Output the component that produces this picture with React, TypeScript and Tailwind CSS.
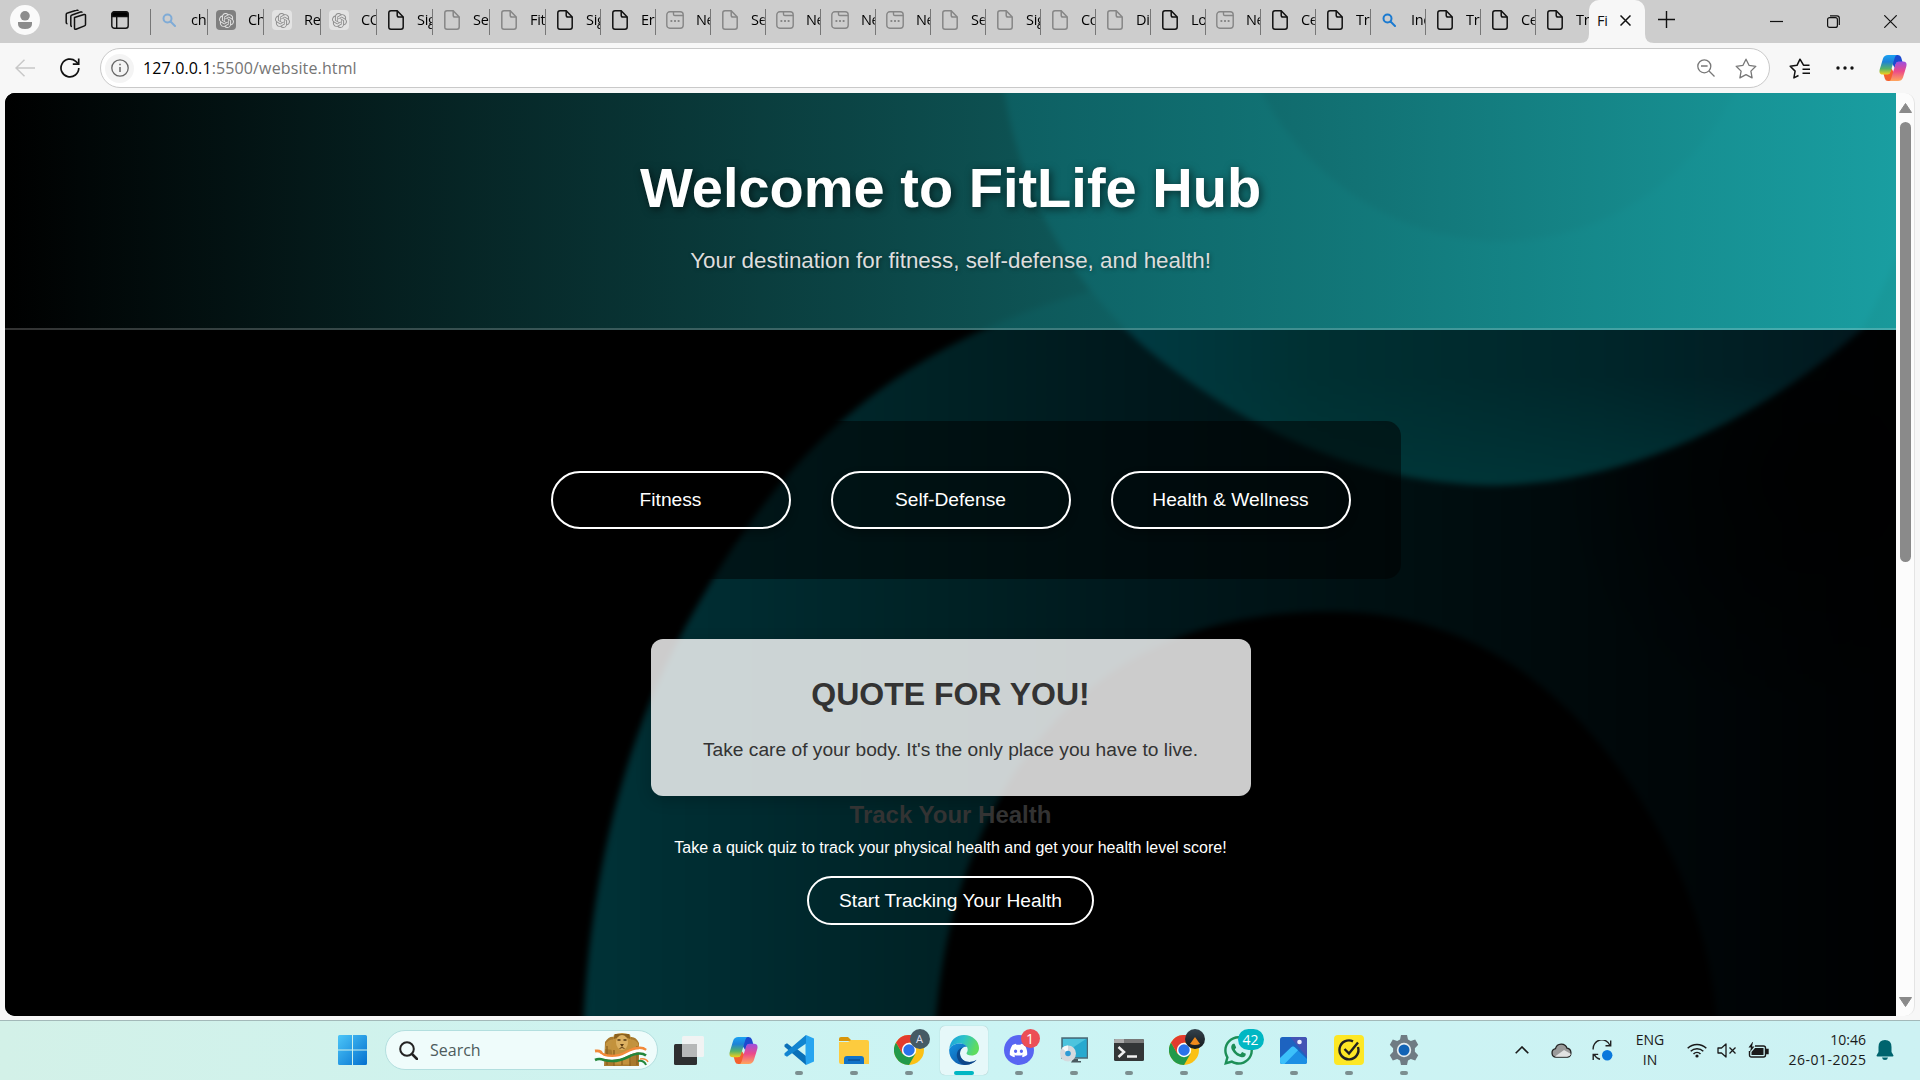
import React from 'react';
import { SiOpenai } from 'react-icons/si';
import { FaDiscord, FaWhatsapp } from 'react-icons/fa';

type TabKind = 'search' | 'gptDark' | 'gpt' | 'doc' | 'form';
type Tab = { kind: TabKind; text: string; w: number; dim?: boolean };

const tabs: Tab[] = [
  { kind: 'search', text: 'cha', w: 57, dim: true },
  { kind: 'gptDark', text: 'Cha', w: 56, dim: true },
  { kind: 'gpt', text: 'Rec', w: 57, dim: true },
  { kind: 'gpt', text: 'CO', w: 56, dim: true },
  { kind: 'doc', text: 'Sig', w: 56 },
  { kind: 'doc', text: 'Sec', w: 57, dim: true },
  { kind: 'doc', text: 'Fitl', w: 56, dim: true },
  { kind: 'doc', text: 'Sig', w: 55 },
  { kind: 'doc', text: 'Err', w: 55 },
  { kind: 'form', text: 'Ne', w: 55, dim: true },
  { kind: 'doc', text: 'Se', w: 55, dim: true },
  { kind: 'form', text: 'Ne', w: 55, dim: true },
  { kind: 'form', text: 'Ne', w: 55, dim: true },
  { kind: 'form', text: 'Ne', w: 55, dim: true },
  { kind: 'doc', text: 'Se', w: 55, dim: true },
  { kind: 'doc', text: 'Sig', w: 55, dim: true },
  { kind: 'doc', text: 'Co', w: 55, dim: true },
  { kind: 'doc', text: 'Dis', w: 55, dim: true },
  { kind: 'doc', text: 'Log', w: 55 },
  { kind: 'form', text: 'Ne', w: 55, dim: true },
  { kind: 'doc', text: 'Ce', w: 55 },
  { kind: 'doc', text: 'Tra', w: 55 },
  { kind: 'search', text: 'Inc', w: 55 },
  { kind: 'doc', text: 'Tra', w: 55 },
  { kind: 'doc', text: 'Ce', w: 55 },
  { kind: 'doc', text: 'Tra', w: 54 },
];

function TabIcon({ kind, dim }: { kind: TabKind; dim?: boolean }) {
  const stroke = dim ? '#868686' : '#111';
  if (kind === 'search')
    return (
      <svg width="14" height="14" viewBox="0 0 14 14" fill="none" stroke={dim ? '#7fabd6' : '#1b7ad0'} strokeWidth="2">
        <circle cx="5.5" cy="5.5" r="4" />
        <path d="M8.5 8.5 13 13" strokeLinecap="round" />
      </svg>
    );
  if (kind === 'gptDark')
    return (
      <span className="-ml-[3px] flex h-5 w-5 items-center justify-center rounded-[4px] bg-[#7f7f7f] text-[#e2e2e2]">
        <SiOpenai size={15} />
      </span>
    );
  if (kind === 'gpt')
    return (
      <span className="-ml-[3px] flex h-5 w-5 items-center justify-center rounded-[4px] bg-[#e3e3e3] text-[#8e8e8e]">
        <SiOpenai size={15} />
      </span>
    );
  if (kind === 'form')
    return (
      <svg className="-ml-px" width="18" height="18" viewBox="0 0 18 18" fill="none" stroke={stroke} strokeWidth="1.4">
        <rect x="0.8" y="0.8" width="16.4" height="16.4" rx="3" />
        <path d="M7.5 1v2.2q0 1.3 1.3 1.3H17" />
        <path d="M4.5 10h1.8M8.1 10h1.8M11.7 10h1.8" strokeWidth="1.9" />
      </svg>
    );
  return (
    <svg width="16" height="20" viewBox="0 0 16 20" fill="none" stroke={stroke} strokeWidth="1.5" strokeLinejoin="round">
      <path d="M3 .8h6.2L15.2 7v10q0 2.2-2.2 2.2H3Q.8 19.2.8 17V3Q.8.8 3 .8Z" />
      <path d="M9.2.8V5.2q0 1.8 1.8 1.8h4.2" />
    </svg>
  );
}

function Copilot({ size, id }: { size: number; id: string }) {
  return (
    <svg width={size} height={size} viewBox="0 0 28 28">
      <defs>
        <linearGradient id={id + 'a'} x1="0" y1="0" x2="0" y2="1">
          <stop offset="0" stopColor="#1aa2f2" />
          <stop offset=".35" stopColor="#1d82d8" />
          <stop offset=".7" stopColor="#55b26a" />
          <stop offset="1" stopColor="#f3cf1a" />
        </linearGradient>
        <linearGradient id={id + 'b'} x1="0" y1="0" x2="0" y2="1">
          <stop offset="0" stopColor="#9a4fe0" />
          <stop offset=".5" stopColor="#ec4a8a" />
          <stop offset="1" stopColor="#ffa65c" />
        </linearGradient>
      </defs>
      <path d="M13 1h6q2.500 0 3.200 2.500L23.500 8h-4q-2 0-2.600 2l-1 4-5-8Z" fill="#1b4ad0" />
      <path d="M15 27H9q-2.500 0-3.200-2.500L4.500 20h4q2 0 2.600-2l1-4 5 8Z" fill="#f4602e" />
      <path d="M9 1h9q-1.500 0-2.200 2.500L11.500 18q-.7 2.500-3 2.500H4q-4.500 0-3.300-5L4 4.500Q5.200 1 9 1Z" fill={`url(#${id}a)`} />
      <path d="M19 27h-9q1.500 0 2.200-2.500L16.500 10q.7-2.500 3-2.500H24q4.500 0 3.300 5L24 23.500Q22.800 27 19 27Z" fill={`url(#${id}b)`} />
    </svg>
  );
}

function TabStrip() {
  return (
    <div className="flex h-[43px] items-start bg-[#cdcdcd]">
      <div className="flex w-[150px] shrink-0 items-center pt-[5px] pl-[10px]">
        <svg width="30" height="30" viewBox="0 0 30 30">
          <circle cx="15" cy="15" r="15" fill="#fafafa" />
          <circle cx="15" cy="10.800" r="4.800" fill="#8c8c8c" />
          <path d="M8 17h14v2q0 5-7 5t-7-5Z" fill="#8c8c8c" />
        </svg>
        <svg className="ml-[25px]" width="22" height="22" viewBox="0 0 22 22" fill="none" stroke="#111" strokeWidth="1.500" strokeLinejoin="round">
          <path d="M9.500 8.500 19 5.500q1.500-.3 1.500 1v9q0 1-1 1.400L11 20.200q-1.500.4-1.500-1Z" />
          <path d="M17 3.800q0-1.200-1.500-.8L7 6q-1.200.3-1.200 1.500v8.700q0 1.200 1.200 1.200" />
          <path d="M13 2q0-1.200-1.500-.7L2.500 4Q1.200 4.300 1.200 5.500v8q0 1.200 1.300 1.200" />
        </svg>
        <svg className="ml-6" width="18" height="18" viewBox="0 0 18 18" fill="none" stroke="#111" strokeWidth="1.400">
          <rect x=".8" y=".8" width="16.400" height="16.400" rx="2.500" />
          <path d="M1 3.500Q1 1 3.500 1h11Q17 1 17 3.500V5.500H1Z" fill="#000" />
          <path d="M5.700 5v12" />
        </svg>
      </div>
      <div className="mt-[9px] h-[26px] w-px bg-[#777]" />
      {tabs.map((t, i) => (
        <div key={i} className="relative flex h-[40px] shrink-0 items-center overflow-hidden pl-[11px]" style={{ width: t.w }}>
          <span className="flex w-[29px] shrink-0">
            <TabIcon kind={t.kind} dim={t.dim} />
          </span>
          <span className="whitespace-nowrap bg-linear-to-r from-black from-60% to-[#999] bg-clip-text font-['Open_Sans','Noto_Sans',sans-serif] text-[14.5px] tracking-[-0.3px] text-transparent">
            {t.text}
          </span>
          {i < tabs.length - 1 && <span className="absolute top-[9px] right-0 h-[26px] w-px bg-[#777]" />}
        </div>
      ))}
      <div className="relative -ml-px flex h-[43px] w-[56px] shrink-0 items-center rounded-t-[10px] bg-[#f7f7f7] pb-[2px] pl-[8px]">
        <svg className="absolute bottom-0 -left-[9px]" width="9" height="9" viewBox="0 0 9 9">
          <path d="M9 0Q9 9 0 9h9Z" fill="#f7f7f7" />
        </svg>
        <svg className="absolute bottom-0 -right-[9px]" width="9" height="9" viewBox="0 0 9 9">
          <path d="M0 0Q0 9 9 9H0Z" fill="#f7f7f7" />
        </svg>
        <span className="w-[23px] font-['Open_Sans','Noto_Sans',sans-serif] text-[14.5px] tracking-[-0.3px] text-[#111]">Fi</span>
        <svg width="11" height="11" viewBox="0 0 11 11" stroke="#111" strokeWidth="1.500">
          <path d="M.5.5l10 10M10.500.5l-10 10" />
        </svg>
      </div>
      <svg className="mt-[11px] ml-[13px] shrink-0" width="17" height="17" viewBox="0 0 17 17" stroke="#111" strokeWidth="1.400">
        <path d="M8.500 0v17M0 8.500h17" />
      </svg>
      <div className="ml-auto flex h-[43px] items-center gap-[44px] pr-[23px]">
        <svg width="13" height="13" viewBox="0 0 13 13" stroke="#111" strokeWidth="1.200"><path d="M0 6.500h13" /></svg>
        <svg width="13" height="13" viewBox="0 0 13 13" fill="none" stroke="#111" strokeWidth="1.200">
          <rect x=".6" y="2.600" width="9.800" height="9.800" rx="2" />
          <path d="M3 .8h7q2.300 0 2.300 2.300V10" />
        </svg>
        <svg width="13" height="13" viewBox="0 0 13 13" stroke="#111" strokeWidth="1.200"><path d="M.3.3l12.400 12.400M12.700.3.3 12.700" /></svg>
      </div>
    </div>
  );
}

function Toolbar() {
  return (
    <div className="flex h-[50px] items-center bg-[#f7f7f7] pl-[15px]">
      <svg width="20" height="18" viewBox="0 0 20 18" fill="none" stroke="#c8c8c8" strokeWidth="1.500">
        <path d="M20 9H1M9.500.8 1 9l8.500 8.200" />
      </svg>
      <svg className="ml-[25px]" width="20" height="20" viewBox="0 0 20 20" fill="none" stroke="#111" strokeWidth="1.700">
        <path d="M18.800 10a8.900 8.900 0 1 1-3-6.700L18.500 6" />
        <path d="M18.700.5v5.700h-5.900" />
      </svg>
      <div className="ml-[20px] flex h-[40px] w-[1670px] items-center rounded-full border border-[#c9c9c9] bg-white pl-[4px]">
        <span className="flex h-[29px] w-[29px] items-center justify-center rounded-full bg-[#f4f4f4]">
          <svg width="18" height="18" viewBox="0 0 18 18" fill="none" stroke="#666" strokeWidth="1.300">
            <circle cx="9" cy="9" r="8.200" />
            <path d="M9 8v5M9 4.800v1.500" strokeWidth="1.500" />
          </svg>
        </span>
        <span className="ml-[9px] font-['Open_Sans','Noto_Sans',sans-serif] text-[16px] tracking-[0.13px] text-[#757575]">
          <span className="text-black">127.0.0.1</span>:5500/website.html
        </span>
        <svg className="ml-auto" width="18" height="18" viewBox="0 0 18 18" fill="none" stroke="#777" strokeWidth="1.300">
          <circle cx="7.300" cy="7.300" r="6.500" />
          <path d="M4 7h6.600M12 12l5.500 5.500" />
        </svg>
        <svg className="mr-[12px] ml-[20px]" width="22" height="21" viewBox="0 0 22 21" fill="none" stroke="#777" strokeWidth="1.300" strokeLinejoin="round">
          <path d="M11 1.200l3 6.100 6.800 1-4.900 4.800 1.200 6.800L11 16.700l-6.100 3.200 1.200-6.800L1.200 8.300l6.800-1Z" />
        </svg>
      </div>
      <svg className="ml-[19px]" width="22" height="21" viewBox="0 0 22 21" fill="none" stroke="#111" strokeWidth="1.500" strokeLinejoin="round">
        <path d="M20.500 7.200h-6L11 1.200 8 7.300l-6.800 1 4.900 4.800-1.200 6.800L9.500 17.500" />
        <path d="M13.500 11.200h7.500M13.500 15.200h7.500" />
      </svg>
      <svg className="ml-[25px]" width="18" height="4" viewBox="0 0 18 4" fill="#111">
        <circle cx="2" cy="2" r="1.700" /><circle cx="9" cy="2" r="1.700" /><circle cx="16" cy="2" r="1.700" />
      </svg>
      <div className="ml-[25px]"><Copilot size={28} id="tb" /></div>
    </div>
  );
}

function Backdrop() {
  return (
    <svg className="absolute inset-0 h-full w-full" viewBox="4 76 1545 753" preserveAspectRatio="none">
      <defs>
        <linearGradient id="ring" gradientUnits="userSpaceOnUse" x1="477" y1="600" x2="1549" y2="600">
          <stop offset="0" stopColor="#003237" />
          <stop offset=".12" stopColor="#002b30" />
          <stop offset=".27" stopColor="#002225" />
          <stop offset=".42" stopColor="#00181c" />
          <stop offset=".6" stopColor="#001012" />
          <stop offset=".8" stopColor="#000709" />
          <stop offset="1" stopColor="#000102" />
        </linearGradient>
        <linearGradient id="orb" gradientUnits="userSpaceOnUse" x1="880" y1="260" x2="1530" y2="260">
          <stop offset="0" stopColor="#003d46" />
          <stop offset=".3" stopColor="#003032" />
          <stop offset=".65" stopColor="#00262a" />
          <stop offset="1" stopColor="#02181e" />
        </linearGradient>
        <linearGradient id="orbRim" x1="0" y1="0" x2="0" y2="1">
          <stop offset=".75" stopColor="#003c3e" stopOpacity="0" />
          <stop offset="1" stopColor="#003c3e" stopOpacity=".6" />
        </linearGradient>
        <radialGradient id="shade" gradientUnits="userSpaceOnUse" cx="1480" cy="390" r="210">
          <stop offset="0" stopColor="#000" stopOpacity=".8" />
          <stop offset="1" stopColor="#000" stopOpacity="0" />
        </radialGradient>
        <filter id="soft" colorInterpolationFilters="sRGB"><feGaussianBlur stdDeviation="2.5" /></filter>
      </defs>
      <rect x="0" y="70" width="1560" height="770" fill="#000" />
      <g filter="url(#soft)">
        <path d="M476 850C480 720 510 605 558 515C618 405 700 290 890 238L1100 190L1580 250V850Z" fill="url(#ring)" />
        <circle cx="1480" cy="390" r="210" fill="url(#shade)" />
        <path d="M763 850C768 765 788 695 828 632C885 545 970 498 1090 499C1195 500 1270 555 1325 630C1375 700 1400 770 1404 850Z" fill="#000" />
        <path d="M816 40C826 160 880 235 936 284C1030 362 1130 396 1225 396C1335 393 1440 340 1522 268Q1570 180 1600 40Z" fill="url(#orb)" />
        <path d="M816 40C826 160 880 235 936 284C1030 362 1130 396 1225 396C1335 393 1440 340 1522 268Q1570 180 1600 40Z" fill="url(#orbRim)" />
        <path d="M1015 40C1050 140 1140 197 1225 197C1320 197 1400 135 1432 40Z" fill="#00161a" />
      </g>
    </svg>
  );
}

const navItems = ['Fitness', 'Self-Defense', 'Health & Wellness'];

function Page() {
  return (
    <div className="flex h-[927px] bg-[#f7f7f7] pl-[5px]">
      <div className="relative h-[923px] w-[1891px] overflow-hidden rounded-l-[10px] bg-black font-['Liberation_Sans',Arial,sans-serif]">
        <Backdrop />
        <div className="relative flex flex-col items-center text-center text-white">
          <header className="flex h-[237px] w-full flex-col items-center border-b-2 border-white/20 bg-[linear-gradient(90deg,rgba(0,0,0,0.78),rgba(32,196,198,0.78))] bg-origin-border pt-[63px]">
            <h1 className="text-[56px] leading-[64px] font-bold [text-shadow:2px_2px_8px_rgba(0,0,0,0.6)]">Welcome to FitLife Hub</h1>
            <p className="mt-[28px] text-[22.4px] leading-[26px] text-[#ddd] [text-shadow:1px_1px_4px_rgba(0,0,0,0.4)]">
              Your destination for fitness, self-defense, and health!
            </p>
          </header>
          <nav className="mt-[91px] flex w-[900px] gap-[40px] rounded-[15px] bg-black/50 p-[50px]">
            {navItems.map((n) => (
              <a key={n} className="flex h-[58px] flex-1 items-center justify-center rounded-[30px] border-2 border-white text-[19.2px] shadow-[0_4px_8px_rgba(0,0,0,0.3)]">
                {n}
              </a>
            ))}
          </nav>
          <section className="mt-[60px] flex h-[157px] w-[600px] flex-col items-center rounded-[12px] bg-white/80 pt-[37px] text-[#333] shadow-[0_4px_15px_rgba(0,0,0,0.2)]">
            <h2 className="text-[32px] leading-[37px] font-bold">QUOTE FOR YOU!</h2>
            <p className="mt-[26px] text-[19.2px] leading-[22px]">Take care of your body. It's the only place you have to live.</p>
          </section>
          <h2 className="mt-[5px] text-[24px] leading-[28px] font-bold text-[#333]">Track Your Health</h2>
          <p className="mt-[10px] text-[16px] leading-[18px]">Take a quick quiz to track your physical health and get your health level score!</p>
          <button className="mt-[19px] flex h-[49px] w-[287px] items-center justify-center rounded-full border-2 border-white pt-px text-[19.2px]">
            Start Tracking Your Health
          </button>
        </div>
      </div>
      <div className="flex h-[923px] w-[19px] flex-col items-center rounded-r-[10px] border-r border-[#e4e4e4] bg-[#fcfcfc] pt-[10px] pb-[9px]">
        <svg width="13" height="10" viewBox="0 0 13 10" fill="#8a8a8a"><path d="M6.500.5 12.500 9.500H.5Z" stroke="#8a8a8a" strokeLinejoin="round" /></svg>
        <div className="mt-[9px] h-[440px] w-[11px] rounded-full bg-[#8a8a8a]" />
        <svg className="mt-auto" width="13" height="10" viewBox="0 0 13 10" fill="#8a8a8a"><path d="M6.500 9.500.5.5h12Z" stroke="#8a8a8a" strokeLinejoin="round" /></svg>
      </div>
    </div>
  );
}

function Lions() {
  return (
    <svg width="55" height="34" viewBox="0 0 55 34">
      <path d="M11 9q4-6 9-5h16q6-1 9 6v23H10Z" fill="#a87a2e" />
      <path d="M12 10q4-5 8-3v10l-9-1ZM44 10q-4-5-8-3v10l9-1Z" fill="#c2933f" />
      <path d="M20 1.500q8-3 16 0l3 12-3 18H20l-3-18Z" fill="#c3923c" />
      <path d="M21 1h14l1.500 5q-8-3.500-17 0Z" fill="#8b611f" />
      <ellipse cx="28" cy="9.500" rx="6" ry="7.500" fill="#dcb162" />
      <path d="M23.500 7h3M29.500 7h3" stroke="#4e3510" strokeWidth="1.600" />
      <path d="M26 11h4l-2 3Z" fill="#5a3b12" />
      <path d="M25.500 15.500q2.500-2 5 0" stroke="#5a3b12" fill="none" />
      <path d="M13 13v19M43 13v19M20 17v16M36 17v16M28 20v12" stroke="#8b611f" strokeWidth="1.300" fill="none" />
      <path d="M1 18q6-1 7 3 12 5 25-2t19-2" stroke="#f28a3a" strokeWidth="2.800" fill="none" />
      <path d="M2 22q4-1 7 2 12 4 24-2.500t19-1.800" stroke="#fff" strokeWidth="2.800" fill="none" />
      <path d="M1 27q4-2 9 0 12 3 24-3t18-1.500" stroke="#23863a" strokeWidth="2.600" fill="none" />
      <path d="M44 28q6-1 8 4" stroke="#23863a" strokeWidth="2" fill="none" />
      <path d="M46 26q6-1 8 3" stroke="#f28a3a" strokeWidth="1.500" fill="none" />
    </svg>
  );
}

function Chrome() {
  return (
    <svg width="30" height="30" viewBox="0 0 30 30">
      <circle cx="15" cy="15" r="15" fill="#fbc116" />
      <path d="M2 7.500A15 15 0 0 0 15 30L21.500 18.700 15 15 8.500 18.700Z" fill="#229a4a" />
      <path d="M2 7.500A15 15 0 0 1 28 7.500H15L8.500 18.700Z" fill="#e33b2e" />
      <circle cx="15" cy="15" r="7.200" fill="#fff" />
      <circle cx="15" cy="15" r="5.700" fill="#2a72ea" />
    </svg>
  );
}

function Edge() {
  return (
    <svg width="30" height="30" viewBox="0 0 30 30">
      <defs>
        <linearGradient id="edgeTop" x1="0" y1="0" x2="1" y2=".3">
          <stop offset="0" stopColor="#1b9de0" /><stop offset=".5" stopColor="#2cc3c8" /><stop offset="1" stopColor="#5fdc5e" />
        </linearGradient>
        <linearGradient id="edgeLow" x1="0" y1="0" x2="1" y2="1">
          <stop offset="0" stopColor="#1492e0" /><stop offset="1" stopColor="#0d4a9a" />
        </linearGradient>
      </defs>
      <path d="M.3 14C1 5.500 7 0 15 0c8.500 0 15 6 15 13 0 5-3.500 7.500-7.500 7.500-3.500 0-5-1.200-5-2.200 0-.8 1.200-1.500 1.200-3.800 0-3.500-3.500-6-8-6C5.500 8.500 1.500 11 .3 14Z" fill="url(#edgeTop)" />
      <path d="M.2 14.500C1.500 11 5.500 8.500 10.700 8.500c4 0 6.500 1.800 7.500 3.500-3-1-7.200 1.500-7.200 6.500 0 5 4.500 8.500 9.500 8.500 2.500 0 5-.8 7-2.200C25 28 20.500 30 15.500 30 6.500 30-.3 23 .2 14.500Z" fill="url(#edgeLow)" />
      <path d="M11 18.500c0-3 1.200-5 3-6-4 .5-7 4.500-6 9.500 1 4.500 4.500 7.500 8.500 8 5-.3 9-2.500 11-5.200-2 1.400-4.500 2.200-7 2.200-5 0-9.500-3.500-9.500-8.500Z" fill="#0b4080" opacity=".8" />
    </svg>
  );
}

function Badge({ children, cls }: { children?: React.ReactNode; cls: string }) {
  return <span className={'absolute flex items-center justify-center rounded-full ' + cls}>{children}</span>;
}

const apps: { id: string; node: React.ReactNode; run?: boolean; active?: boolean }[] = [
  {
    id: 'taskview',
    node: (
      <svg width="30" height="29" viewBox="0 0 30 29">
        <rect x="0" y="8" width="23" height="21" rx="1.500" fill="#2d2f30" />
        <rect x="8" y="0" width="22" height="21" rx="1.500" fill="#f1f3f3" />
        <path d="M8 8h15v13H9.500Q8 21 8 19.500Z" fill="#b6b8b8" />
      </svg>
    ),
  },
  { id: 'copilot', node: <Copilot size={29} id="bar" /> },
  {
    id: 'vscode', run: true,
    node: (
      <svg width="30" height="30" viewBox="0 0 30 30">
        <path d="M22 0 8.500 12.500 3 8.200.5 9.700v2L22 30V21L10.500 12Z" fill="#0a70b8" />
        <path d="M22 0 30 3.500v23L22 30 21.500 22V8Z" fill="#27a5f0" />
        <path d="M22 0v8.500L3 21.800.5 20.300v-2Z" fill="#1184d0" />
      </svg>
    ),
  },
  {
    id: 'files', run: true,
    node: (
      <svg width="30" height="27" viewBox="0 0 30 27">
        <path d="M0 2Q0 0 2 0h7l4 4H0Z" fill="#d8950a" />
        <path d="M0 5h9l3-2h16q2 0 2 2v22H2q-2 0-2-2Z" fill="#fdcb3e" />
        <path d="M5 27v-5q0-3 3-3h14q3 0 3 3v5Z" fill="#1173c8" />
        <path d="M9 23h12" stroke="#0a4f96" strokeWidth="1.500" />
      </svg>
    ),
  },
  { id: 'chromeA', run: true, node: (<><Chrome /><Badge cls="-top-[6px] left-[16px] h-[20px] w-[20px] bg-[#455a64] text-[11px] text-[#dde]">A</Badge></>) },
  { id: 'edge', run: true, active: true, node: <Edge /> },
  {
    id: 'discord', run: true,
    node: (
      <>
        <span className="flex h-[30px] w-[30px] items-center justify-center rounded-full bg-[#5865f2] text-white"><FaDiscord size={19} /></span>
        <Badge cls="-top-[6px] left-[17px] h-[19px] w-[19px] bg-[#ec4e56] text-[14px] text-white">1</Badge>
      </>
    ),
  },
  {
    id: 'pc', run: true,
    node: (
      <svg width="28" height="26" viewBox="0 0 28 26">
        <rect x="2" y="1" width="25.500" height="20" fill="#27a9cf" stroke="#4d6a76" strokeWidth="1.500" />
        <path d="M3 2h23L3 17Z" fill="#4cc4de" />
        <path d="M13 22h5v2h3v1.500H11Z" fill="#4a5a60" />
        <circle cx="8" cy="16.500" r="8" fill="#d5dade" />
        <path d="M8 16.500 2 11a8 8 0 0 1 6-2.500Z" fill="#f5f8fa" />
        <circle cx="8" cy="16.500" r="2.800" fill="#2e9bd6" />
      </svg>
    ),
  },
  {
    id: 'terminal', run: true,
    node: (
      <svg width="30" height="22" viewBox="0 0 30 22">
        <rect width="30" height="22" rx="1.500" fill="#333637" />
        <path d="M0 4V1.500Q0 0 1.500 0H28.500Q30 0 30 1.500V4Z" fill="#777" />
        <path d="M0 4V1.500Q0 0 1.500 0H10v4Z" fill="#aaa" />
        <path d="M4.500 8l5.500 5-5.500 5" stroke="#f0f0f0" strokeWidth="2.500" fill="none" />
        <path d="M13 17.500h10" stroke="#f0f0f0" strokeWidth="2.500" />
      </svg>
    ),
  },
  {
    id: 'chromeB', run: true,
    node: (
      <>
        <Chrome />
        <Badge cls="-top-[6px] left-[16px] h-[20px] w-[20px] overflow-hidden bg-linear-to-b from-[#34424c] to-[#15191c]">
          <svg width="10" height="8" viewBox="0 0 10 8" className="mt-1"><path d="M5 0 10 7Q5 9 0 7Z" fill="#f08a1c" /></svg>
        </Badge>
      </>
    ),
  },
  {
    id: 'whatsapp', run: true,
    node: (
      <>
        <FaWhatsapp size={33} color="#1c8f57" className="-m-[1.5px] shrink-0" />
        <Badge cls="-top-[6px] left-[14px] h-[21px] w-[26px] bg-[#00b7c3] text-[14px] text-white">42</Badge>
      </>
    ),
  },
  {
    id: 'photos', run: true,
    node: (
      <svg width="27" height="27" viewBox="0 0 27 27">
        <rect width="27" height="27" rx="2.500" fill="#1d63c0" />
        <path d="M10 0h14.500Q27 0 27 2.500V20Z" fill="#4453b4" />
        <path d="M0 21 11 10.500q2-2 4 0L27 22v2.500q0 2.500-2.500 2.500h-22Q0 27 0 24.500Z" fill="#1c8fe4" />
        <path d="M0 21 11 10.500q2-2 4 0l3 2.800L4.500 27h-2Q0 27 0 24.500Z" fill="#3cc0fa" />
        <circle cx="19.500" cy="5" r="2.300" fill="#eef" />
      </svg>
    ),
  },
  {
    id: 'norton', run: true,
    node: (
      <svg width="30" height="30" viewBox="0 0 30 30" fill="none" stroke="#222" strokeWidth="2.400">
        <rect width="30" height="30" rx="4" fill="#fde725" stroke="none" />
        <path d="M19 6.300A9.500 9.500 0 1 0 24 12" />
        <path d="M10.500 14 15 18.500 24 7.500" />
      </svg>
    ),
  },
  {
    id: 'settings', run: true,
    node: (
      <svg width="30" height="30" viewBox="0 0 30 30">
        <path d="M12 0h6l1 4.500 2.800 1.600L26.200 4.600l3 5.200-3.300 3.400v3.600l3.300 3.400-3 5.200-4.400-1.500L19 25.500 18 30h-6l-1-4.500-2.800-1.600-4.400 1.500-3-5.200 3.300-3.400v-3.600L.8 9.800l3-5.200 4.400 1.500L11 4.500Z" fill="#6f7b83" />
        <circle cx="15" cy="15" r="7.200" fill="#e6edf0" />
        <circle cx="15" cy="15" r="5.500" fill="#1263b5" />
      </svg>
    ),
  },
];

function Taskbar() {
  return (
    <div className="flex h-[60px] items-start border-t border-[#a3b9b9] bg-linear-to-r from-[#d3f1e8] via-[#cbf4f4] to-[#cdf2f3] font-['Open_Sans','Noto_Sans',sans-serif]">
      <svg className="mt-[14px] ml-[338px] shrink-0" width="29" height="30" viewBox="0 0 29 30">
        <defs>
          <linearGradient id="win" x1="0" y1="0" x2="1" y2="1"><stop offset="0" stopColor="#4cc6f8" /><stop offset="1" stopColor="#0470cf" /></linearGradient>
        </defs>
        <path d="M1.500 0H14v14.500H0V1.500Q0 0 1.500 0ZM15 0h12.500Q29 0 29 1.500v13H15ZM0 15.500h14V30H1.500Q0 30 0 28.500ZM15 15.500h14v13q0 1.500-1.500 1.500H15Z" fill="url(#win)" />
      </svg>
      <div className="mt-[9px] ml-[18px] flex h-[40px] w-[273px] shrink-0 items-center rounded-full border border-[#b3dfdf] bg-[#effcfb] pr-[8px] pl-[13px]">
        <svg width="19" height="19" viewBox="0 0 19 19" fill="none" stroke="#222" strokeWidth="2">
          <circle cx="8" cy="8" r="6.800" /><path d="M13 13l5 5" strokeWidth="2.500" strokeLinecap="round" />
        </svg>
        <span className="ml-[12px] text-[16px] text-[#4d5b5c]">Search</span>
        <div className="ml-auto"><Lions /></div>
      </div>
      <div className="ml-[3px] flex">
        {apps.map((a) => (
          <div key={a.id} className="flex h-[59px] w-[55px] shrink-0 justify-center pt-[5px]">
            <div className={a.active ? 'relative flex h-[49px] w-[48px] justify-center rounded-[5px] bg-[#e6f8f9] shadow-[0_0_1px_rgba(0,0,0,0.3)]' : 'relative flex h-[49px] w-[48px] justify-center'}>
              <span className="relative mt-[9px] flex h-[30px] w-[30px] items-center justify-center">{a.node}</span>
              {a.run && <span className={a.active ? 'absolute bottom-0 h-[4px] w-[20px] rounded-full bg-[#00b7c3]' : 'absolute bottom-0 h-[4px] w-[8px] rounded-full bg-[#7c8f90]'} />}
            </div>
          </div>
        ))}
      </div>
      <div className="ml-auto flex h-[59px] items-center pr-[26px] pb-px text-[14px] leading-[20px] text-[#1a1a1a]">
        <svg width="14" height="8" viewBox="0 0 14 8" fill="none" stroke="#1a1a1a" strokeWidth="1.600"><path d="M.7 7.300 7 1l6.300 6.300" /></svg>
        <svg className="ml-[22px]" width="21" height="15" viewBox="0 0 21 15" stroke="#222" strokeWidth="1.300">
          <path d="M5 14.200a4.300 4.300 0 0 1-.5-8.500 6 6 0 0 1 11.500-.5 4.600 4.600 0 0 1 .5 9Z" fill="#9a9a9a" />
          <path d="M4 13.500 13 7l7 4q-1 2.700-4 2.700H5Z" fill="#e2e2e2" stroke="none" />
        </svg>
        <svg className="ml-[20px]" width="21" height="21" viewBox="0 0 21 21" fill="none" stroke="#222" strokeWidth="1.400">
          <path d="M1.200 9.500A8.700 8.700 0 0 1 18 5.500M18.700.5v5.300h-5.200" />
          <path d="M8 19.300a8.700 8.700 0 0 1-5.800-4.800M1.200 20v-5.600h5" />
          <circle cx="15.200" cy="15.200" r="5.200" fill="#0a78dc" stroke="none" />
        </svg>
        <div className="ml-[22px] w-[30px] text-center">
          <div>ENG</div>
          <div>IN</div>
        </div>
        <svg className="ml-[22px]" width="20" height="15" viewBox="0 0 20 15" fill="none" stroke="#1a1a1a" strokeWidth="1.500">
          <path d="M.7 5.300a13.200 13.200 0 0 1 18.600 0M3.700 8.300a9 9 0 0 1 12.600 0M6.500 11a5 5 0 0 1 7 0" />
          <circle cx="10" cy="13" r="1.600" fill="#1a1a1a" stroke="none" />
        </svg>
        <svg className="ml-[10px]" width="20" height="15" viewBox="0 0 20 15" fill="none" stroke="#1a1a1a" strokeWidth="1.300">
          <path d="M1 5h3.500L9 1v13l-4.500-4H1Z" strokeLinejoin="round" /><path d="M12.500 4.500l6 6M18.500 4.500l-6 6" />
        </svg>
        <svg className="ml-[11px]" width="21" height="17" viewBox="0 0 21 17" fill="none" stroke="#1a1a1a" strokeWidth="1.400">
          <path d="M7 4h8.500q2 0 2 2v7q0 2-2 2H3.500q-2 0-2-2V9" />
          <path d="M7 6h8.500v7H3.500V10Z" fill="#1a1a1a" stroke="none" />
          <path d="M18 7.500h2v4h-2" fill="#1a1a1a" />
          <path d="M4.500 0 .5 5.500h2.500L2 10l4.500-5.500H4L5 0Z" fill="#1a1a1a" stroke="none" />
        </svg>
        <div className="ml-[17px] w-[80px] text-right">
          <div>10:46</div>
          <div className="-mr-[0.42px] tracking-[0.48px]">26-01-2025</div>
        </div>
        <svg className="ml-[10px]" width="18" height="20" viewBox="0 0 18 20" fill="#00646e">
          <path d="M9 0q6.500 0 6.500 7v5l2 3.500q0 1-1 1h-15q-1 0-1-1l2-3.500V7q0-7 6.500-7ZM6 17.500h6q-.5 2.500-3 2.500t-3-2.500Z" />
        </svg>
      </div>
    </div>
  );
}

export default function App() {
  return (
    <div className="flex h-[1080px] w-[1920px] flex-col overflow-hidden bg-[#f7f7f7]">
      <TabStrip />
      <Toolbar />
      <Page />
      <Taskbar />
    </div>
  );
}
